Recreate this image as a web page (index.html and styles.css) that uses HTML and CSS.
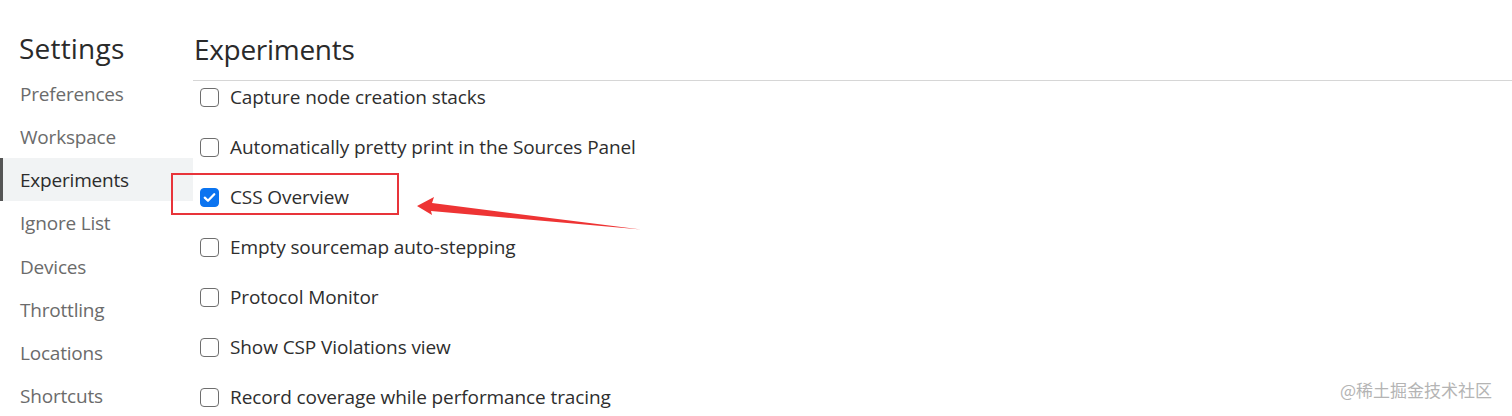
FILE: index.html
```html
<!DOCTYPE html>
<html lang="en">
<head>
<meta charset="utf-8">
<title>Settings - Experiments</title>
<link rel="stylesheet" href="styles.css">
</head>
<body>
<div class="app">
  <aside class="sidebar">
    <h1 class="title">Settings</h1>
    <nav class="nav">
      <div class="nav-item">Preferences</div>
      <div class="nav-item">Workspace</div>
      <div class="nav-item active">Experiments</div>
      <div class="nav-item">Ignore List</div>
      <div class="nav-item">Devices</div>
      <div class="nav-item">Throttling</div>
      <div class="nav-item">Locations</div>
      <div class="nav-item">Shortcuts</div>
    </nav>
  </aside>
  <main class="main">
    <header class="header"><h2 class="heading">Experiments</h2></header>
    <ul class="list">
      <li class="row"><span class="box"></span><span class="label">Capture node creation stacks</span></li>
      <li class="row"><span class="box"></span><span class="label">Automatically pretty print in the Sources Panel</span></li>
      <li class="row"><span class="box checked"><svg viewBox="0 0 20 20" width="19" height="19"><path d="M5 10.2 L8.4 13.4 L15 6.6" fill="none" stroke="#fff" stroke-width="2.4" stroke-linecap="round" stroke-linejoin="round"/></svg></span><span class="label">CSS Overview</span></li>
      <li class="row"><span class="box"></span><span class="label">Empty sourcemap auto-stepping</span></li>
      <li class="row"><span class="box"></span><span class="label">Protocol Monitor</span></li>
      <li class="row"><span class="box"></span><span class="label">Show CSP Violations view</span></li>
      <li class="row"><span class="box"></span><span class="label">Record coverage while performance tracing</span></li>
    </ul>
  </main>
</div>
<div class="highlight"></div>
<svg class="arrow" width="1512" height="416" viewBox="0 0 1512 416">
  <polygon points="417,206 434,197 432,203 641,229.5 431,211 432,215" fill="#ee3434"/>
</svg>
<div class="watermark">@稀土掘金技术社区</div>
</body>
</html>
```
FILE: styles.css
```css
* { box-sizing: border-box; }
html, body {
  margin: 0;
  padding: 0;
  width: 1512px;
  height: 416px;
  overflow: hidden;
  background: #fff;
  font-family: "Open Sans", "Noto Sans", sans-serif;
  color: #303030;
}
.app {
  display: flex;
  height: 416px;
}
.sidebar {
  width: 193px;
  flex: none;
}
.title {
  margin: 0;
  padding: 29px 0 0 19px;
  height: 72px;
  font-size: 28px;
  font-weight: 400;
  line-height: 38px;
  color: #2a2a2a;
  letter-spacing: 0.2px;
}
.nav {
  display: flex;
  flex-direction: column;
}
.nav-item {
  height: 43.15px;
  line-height: 44px;
  padding-left: 20px;
  font-size: 19px;
  color: #6b6b6b;
  letter-spacing: -0.2px;
}
.nav-item.active {
  background: #f1f3f4;
  color: #2c2c2c;
  border-left: 3px solid #555;
  padding-left: 17px;
}
.main {
  flex: 1;
  display: flex;
  flex-direction: column;
  overflow: hidden;
}
.header {
  flex: none;
  height: 81px;
  border-bottom: 1px solid #d6d6d6;
  padding: 29px 0 0 1px;
}
.heading {
  margin: 0;
  font-size: 28px;
  font-weight: 400;
  line-height: 40px;
  color: #2a2a2a;
  letter-spacing: -0.3px;
}
.list {
  flex: none;
  list-style: none;
  margin: 0;
  padding: 0;
}
.row {
  height: 50px;
  display: flex;
  align-items: flex-start;
  padding: 6px 0 0 7px;
}
.box {
  width: 19px;
  height: 19px;
  margin-top: 1px;
  border: 1.5px solid #6e6e6e;
  border-radius: 4px;
  flex: none;
  display: flex;
  align-items: center;
  justify-content: center;
}
.box.checked {
  background: #0b74f0;
  border-color: #0b74f0;
}
.box.checked svg { flex: none; }
.label {
  margin-left: 11px;
  font-size: 19px;
  line-height: 20px;
  color: #2e2e2e;
  letter-spacing: -0.1px;
}
.highlight {
  position: absolute;
  left: 171px;
  top: 173px;
  width: 228px;
  height: 42px;
  border: 2px solid #e8343a;
}
.arrow {
  position: absolute;
  left: 0;
  top: 0;
  pointer-events: none;
}
.watermark {
  position: absolute;
  left: 1340px;
  top: 378px;
  font-family: "Noto Sans CJK SC", sans-serif;
  font-size: 17px;
  line-height: 24px;
  color: #b4b4b4;
}
```
